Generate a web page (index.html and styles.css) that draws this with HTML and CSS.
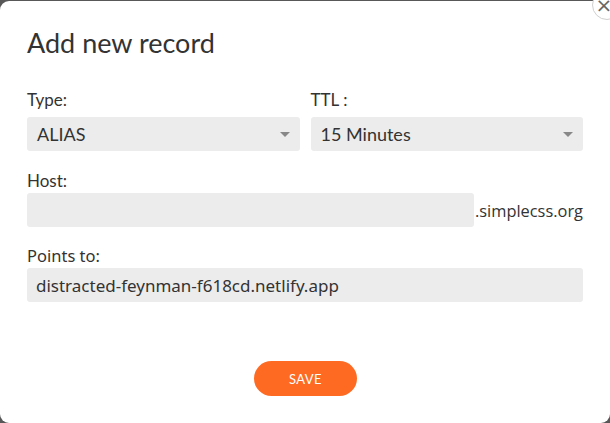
FILE: index.html
```html
<!DOCTYPE html>
<html>
<head>
<meta charset="utf-8">
<link rel="stylesheet" href="styles.css">
</head>
<body>
<div class="modal">
  <button class="close" aria-label="Close">&times;</button>
  <h1 class="title">Add new record</h1>
  <div class="row">
    <div class="field">
      <label class="label">Type:</label>
      <div class="select"><span>ALIAS</span><span class="caret"></span></div>
    </div>
    <div class="field">
      <label class="label">TTL :</label>
      <div class="select"><span>15 Minutes</span><span class="caret"></span></div>
    </div>
  </div>
  <div class="field host-field">
    <label class="label">Host:</label>
    <div class="host-row">
      <div class="input host-input"></div>
      <span class="suffix">.simplecss.org</span>
    </div>
  </div>
  <div class="field points-field">
    <label class="label ubuntu">Points to:</label>
    <div class="input ubuntu">distracted-feynman-f618cd.netlify.app</div>
  </div>
  <div class="actions">
    <button class="save">SAVE</button>
  </div>
</div>
</body>
</html>
```
FILE: styles.css
```css
html, body {
  margin: 0;
  padding: 0;
  background: #585858;
  height: 100%;
  overflow: hidden;
}
body {
  font-family: "Lato", "Open Sans", sans-serif;
  color: #333;
}
.modal {
  position: relative;
  margin-top: 1px;
  height: 422px;
  background: #fff;
  border-radius: 9px;
  box-sizing: border-box;
  padding: 26px 27px 0 27px;
}
.close {
  position: absolute;
  top: -11px;
  right: -12px;
  width: 30px;
  height: 30px;
  border-radius: 50%;
  border: 1px solid #d0d0d0;
  background: #fff;
  color: #666;
  font-size: 20px;
  line-height: 26px;
  padding: 0 6px 0 0;
  text-align: center;
  font-family: "DejaVu Sans", sans-serif;
}
.title {
  margin: 0;
  font-size: 27px;
  font-weight: 400;
  line-height: 32px;
  color: #333;
}
.row {
  display: flex;
  gap: 11px;
  margin-top: 31px;
}
.row .field {
  flex: 1;
}
.label {
  display: block;
  font-size: 17px;
  line-height: 20px;
  color: #333;
  margin-bottom: 7px;
}
.select, .input {
  height: 34px;
  background: #ececec;
  border-radius: 3px;
  box-sizing: border-box;
  display: flex;
  align-items: center;
  font-size: 18px;
  color: #333;
  padding: 0 10px;
}
.select {
  justify-content: space-between;
}
.caret {
  width: 0;
  height: 0;
  border-left: 5px solid transparent;
  border-right: 5px solid transparent;
  border-top: 5px solid #888;
  margin-right: 0;
}
.host-field {
  margin-top: 20px;
}
.host-field .label {
  margin-bottom: 2px;
}
.host-row {
  display: flex;
  align-items: flex-end;
}
.host-input {
  width: 447px;
}
.suffix {
  font-family: "Open Sans", sans-serif;
  font-size: 16.4px;
  color: #333;
  padding-bottom: 5px;
  margin-left: 1px;
}
.points-field {
  margin-top: 19px;
}
.points-field .label {
  margin-bottom: 2px;
}
.ubuntu {
  font-family: "Noto Sans", sans-serif;
}
.points-field .label {
  font-size: 16.5px;
}
.points-field .input {
  font-size: 17px;
  padding-left: 9px;
}
.actions {
  display: flex;
  justify-content: center;
  margin-top: 59px;
}
.save {
  width: 103px;
  height: 35px;
  border: none;
  border-radius: 18px;
  background: #ff6a22;
  color: #fff;
  font-family: "Lato", sans-serif;
  font-size: 13px;
  letter-spacing: 0.4px;
  margin-left: 1px;
  padding: 0;
}
```
